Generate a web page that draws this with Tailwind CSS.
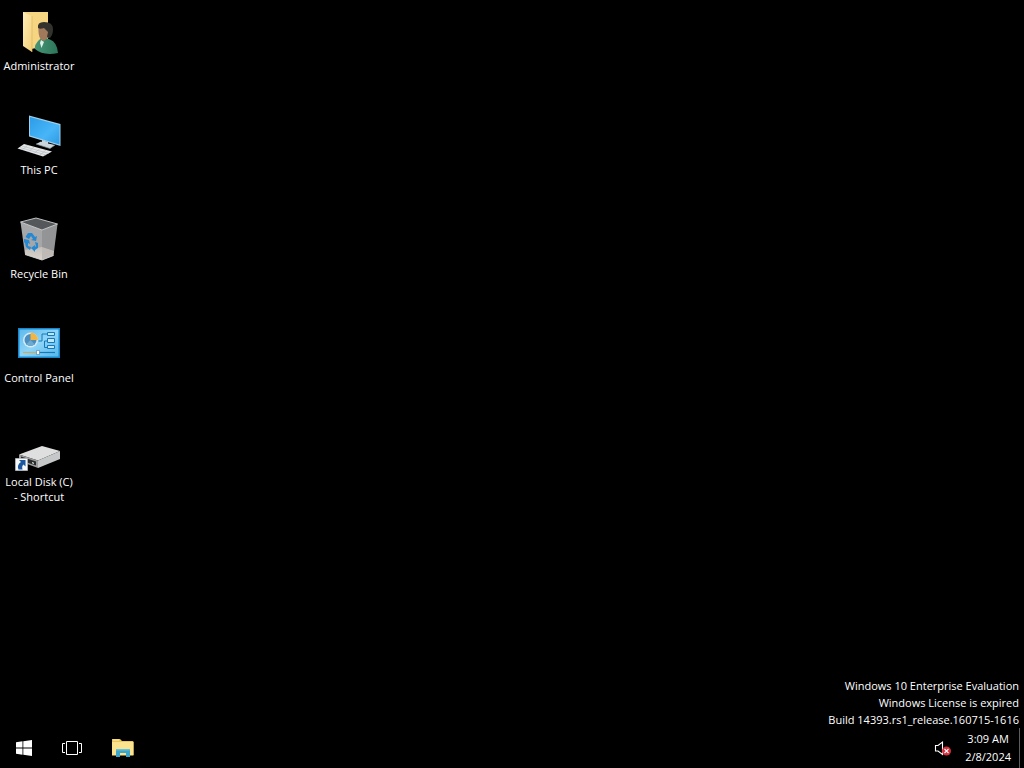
<!DOCTYPE html>
<html lang="en">
<head>
<meta charset="utf-8">
<title>Desktop</title>
<script src="https://cdn.jsdelivr.net/npm/@tailwindcss/browser@4"></script>
</head>
<body class="bg-black text-white font-['Open_Sans','Noto_Sans',sans-serif] text-[11px]">
<div class="min-h-screen flex flex-col">
  <main class="flex-1 flex justify-between">
    <nav aria-label="Desktop icons" class="w-[78px] flex flex-col gap-2 pt-2">
      <button class="h-24 flex flex-col items-center gap-[2px] leading-[15px]">
        <svg class="size-12 shrink-0" viewBox="15 8 48 48" aria-hidden="true">
          <defs>
            <linearGradient id="fold" x1="0" x2="1" y1="0" y2="1"><stop offset="0" stop-color="#ffeeb8"/><stop offset="1" stop-color="#f3cf78"/></linearGradient>
            <linearGradient id="coat" x1="0" x2="1"><stop offset="0" stop-color="#459577"/><stop offset="1" stop-color="#2d7558"/></linearGradient>
          </defs>
          <path d="M23 12H48V46L31 49L23 45Z" fill="#f5d582"/>
          <path d="M23 12L32 16V52L23 46Z" fill="url(#fold)"/>
          <path d="M32 16V52" stroke="#ddb65e" stroke-width=".7"/>
          <path d="M35 49Q34 45 39 40L43 37L50 39.500Q57 42 58 53Q43 56 35 49Z" fill="url(#coat)"/>
          <path d="M41 40L44 42L41.500 48L40 43Z" fill="#dff0e8"/>
          <path d="M38.500 28Q39 23 45 23Q51 24 51 30Q51 37 47 38.500L44 41L40.500 39Q38 35 38.500 28Z" fill="#a17a5c"/>
          <path d="M38 28Q37 22 44 22Q53 22 53 29Q53 35 50 38L47 37L48 32L44 28Q40 29.500 38 28Z" fill="#33322d"/>
        </svg>
        <span class="whitespace-nowrap">Administrator</span>
      </button>
      <button class="h-24 flex flex-col items-center gap-[2px] leading-[15px]">
        <svg class="size-12 shrink-0" viewBox="15 112 48 48" aria-hidden="true">
          <defs><linearGradient id="scr" x1="0" x2="1" y1="0" y2="1"><stop offset="0" stop-color="#2b9ce8"/><stop offset=".6" stop-color="#48b5f8"/><stop offset="1" stop-color="#2e9ae2"/></linearGradient></defs>
          <path d="M29 115.500L60.500 124V146L29 136.500Z" fill="#9fcfeb"/>
          <path d="M30 117L59.500 125V144.500L30 135.500Z" fill="url(#scr)"/>
          <path d="M42 140L48 142V143.500L55 145L50 148.500L36 144L41 141.500L42 142Z" fill="#cbd6dc"/>
          <path d="M36 144L50 148.500L55 145" fill="none" stroke="#8d9498" stroke-width=".7"/>
          <path d="M24 144L52 151.500L43 156.500L17.500 148.500Z" fill="#e4e6e8"/>
          <path d="M22 146L49 153.500M20 147.500L46 155M28 145L22 150M34 147L28 152M40 148.500L34 153.500M46 150L40 155" stroke="#a9afb3" stroke-width=".5"/>
        </svg>
        <span class="whitespace-nowrap">This PC</span>
      </button>
      <button class="h-24 flex flex-col items-center gap-[2px] leading-[15px]">
        <svg class="size-12 shrink-0" viewBox="15 216 48 48" aria-hidden="true">
          <defs><linearGradient id="bin" x1="0" x2="0" y1="0" y2="1"><stop offset="0" stop-color="#a5a7a9"/><stop offset=".7" stop-color="#a4a6a8"/><stop offset="1" stop-color="#d8d3ce"/></linearGradient></defs>
          <path d="M20.500 222L36 218L57.500 224L42 230Z" fill="#55585a"/>
          <path d="M20.500 222L42 230V260L25 254.500Z" fill="url(#bin)"/>
          <path d="M42 230L57.500 224L53.500 255.500L42 260Z" fill="#929496"/>
          <path d="M25 250L42 247L54 251L53.500 255.500L42 260L25 254.500Z" fill="#ddd3cb" opacity=".6"/>
          <path d="M20.500 222L36 218L57.500 224L42 230ZM25 254.500L42 260L53.500 255.500" fill="none" stroke="#d0d2d3" stroke-width=".9"/>
          <g fill="#2488d3">
            <path d="M28 233L32 233L35 237L37 236L36 241L31 240L33 239L31 236L29 239L25.500 237Z"/>
            <path d="M24 239L29 240L30 244L28 243L28 246L31 247L30 250L26 247L25 243L24 242Z"/>
            <path d="M35 242L38 243L38 248L35 250V252L31 248L35 245V247L36 246Z"/>
          </g>
        </svg>
        <span class="whitespace-nowrap">Recycle Bin</span>
      </button>
      <button class="h-24 flex flex-col items-center gap-[2px] leading-[15px]">
        <svg class="size-12 shrink-0" viewBox="15 320 48 48" aria-hidden="true">
          <defs><linearGradient id="cp" x1="0" x2="1" y1="0" y2="1"><stop offset="0" stop-color="#5fb9ec"/><stop offset=".5" stop-color="#8ed5f8"/><stop offset="1" stop-color="#55b7ed"/></linearGradient></defs>
          <path d="M18 328H60V358H18Z" fill="#1688cd"/>
          <path d="M19.500 329.500H58.500V356.500H19.500Z" fill="url(#cp)"/>
          <circle cx="30.500" cy="340" r="7.500" fill="#d5ecf8"/>
          <circle cx="30.500" cy="340" r="6" fill="#4a8fc0"/>
          <path d="M30.500 340L26.200 344.300A6 6 0 0 0 34.700 344.300Z" fill="#6ea9d0"/>
          <path d="M30.500 332.500A7.500 7.500 0 0 1 38 340H30.500Z" fill="#f2b544"/>
          <path d="M38.500 341H42V334H47M47 341H44.500V347.500H47" fill="none" stroke="#1778b5" stroke-width="1"/>
          <path d="M47.500 332.500H54.500V335.500H47.500ZM47.500 338.500H54.500V342.500H47.500ZM47.500 345.500H54.500V348.500H47.500Z" fill="#bce7fc" stroke="#1778b5"/>
          <path d="M23 352.500H37" stroke="#c7ad68" stroke-width="1.200"/>
          <path d="M39 352.500H55" stroke="#1778b5" stroke-width="1.200"/>
          <path d="M36.500 350.500H39.500V354.500H36.500Z" fill="#fff" stroke="#427da3" stroke-width=".6"/>
        </svg>
        <span class="whitespace-nowrap">Control Panel</span>
      </button>
      <button class="h-24 flex flex-col items-center gap-[2px] leading-[15px]">
        <svg class="size-12 shrink-0" viewBox="15 424 48 48" aria-hidden="true">
          <path d="M19 454.500L42 446L60 451L38 460.500Z" fill="#dfdfdf"/>
          <path d="M38 460.500L60 451V459L38 468Z" fill="#c6c7c8"/>
          <path d="M19 454.500L38 460.500V468L19 461Z" fill="#9d9e9f"/>
          <path d="M21 456.500L36 461.500V465.500L21 460.500Z" fill="#2b2c2d"/>
          <path d="M32 462L34 462.700V464L32 463.300Z" fill="#cfe9da"/>
          <path d="M15.500 458.500H27.500V470.500H15.500Z" fill="#f7f8fa" stroke="#b5b9bf" stroke-width=".8"/>
          <path d="M19 460H25.500V466.500L23.500 464.500Q21.500 466 22.500 469.500H18.500Q16.500 465 21 462Z" fill="#1d579f"/>
        </svg>
        <span class="whitespace-nowrap">Local Disk (C)<br>- Shortcut</span>
      </button>
    </nav>
    <div class="self-end pr-[5px] text-right leading-[17px]">
      <p>Windows 10 Enterprise Evaluation</p>
      <p>Windows License is expired</p>
      <p>Build 14393.rs1_release.160715-1616</p>
    </div>
  </main>
  <footer class="h-10 flex items-stretch justify-between">
    <div class="flex">
      <button aria-label="Start" class="w-12 flex items-center justify-center">
        <svg class="size-4" viewBox="0 0 16 16" fill="#fff"><path d="M0 2.200L6.500 1.300V7.500H0ZM7.300 1.200L16 0V7.500H7.300ZM0 8.400H6.500V14.700L0 13.800ZM7.300 8.400H16V16L7.300 14.800Z"/></svg>
      </button>
      <button aria-label="Task View" class="w-12 flex items-center justify-center">
        <svg class="w-5 h-4" viewBox="0 0 20 16" fill="none" stroke="#fff"><path d="M4.500 1.500H15.500V14.500H4.500ZM3 3.500H.5V12.500H3M17 3.500H19.500V12.500H17"/></svg>
      </button>
      <button aria-label="File Explorer" class="ml-[3px] w-12 flex items-center justify-center">
        <svg class="size-6" viewBox="111 736 24 24">
          <path d="M112 739H120L122 741H132.500Q133.500 741 133.500 742V755H112Z" fill="#eac65b"/>
          <path d="M112 742H133.500V755.500H112Z" fill="#fbe38e"/>
          <path d="M113 740H119" stroke="#fff0b0"/>
          <path d="M116 749H130V757H126V753H120V757H116Z" fill="#3ba5cb"/>
          <path d="M116 749H130V750.500H116Z" fill="#67c0dc"/>
        </svg>
      </button>
    </div>
    <div class="flex items-center">
      <button aria-label="Volume" class="mr-3">
        <svg class="size-5 block" viewBox="933 738 20 20">
          <path d="M935.500 745.500H938L942.500 742V754.500L938 751H935.500Z" fill="none" stroke="#fff" stroke-width="1.100"/>
          <circle cx="946.500" cy="751" r="4.500" fill="#d32f3c"/>
          <path d="M944.500 749L948.500 753M948.500 749L944.500 753" stroke="#fff" stroke-width="1.100"/>
        </svg>
      </button>
      <button class="leading-[18px] text-center mr-2 self-stretch">3:09 AM<br>2/8/2024</button>
      <button aria-label="Show desktop" class="w-[5px] self-stretch border-l border-[#5c5c5c]"></button>
    </div>
  </footer>
</div>
</body>
</html>
